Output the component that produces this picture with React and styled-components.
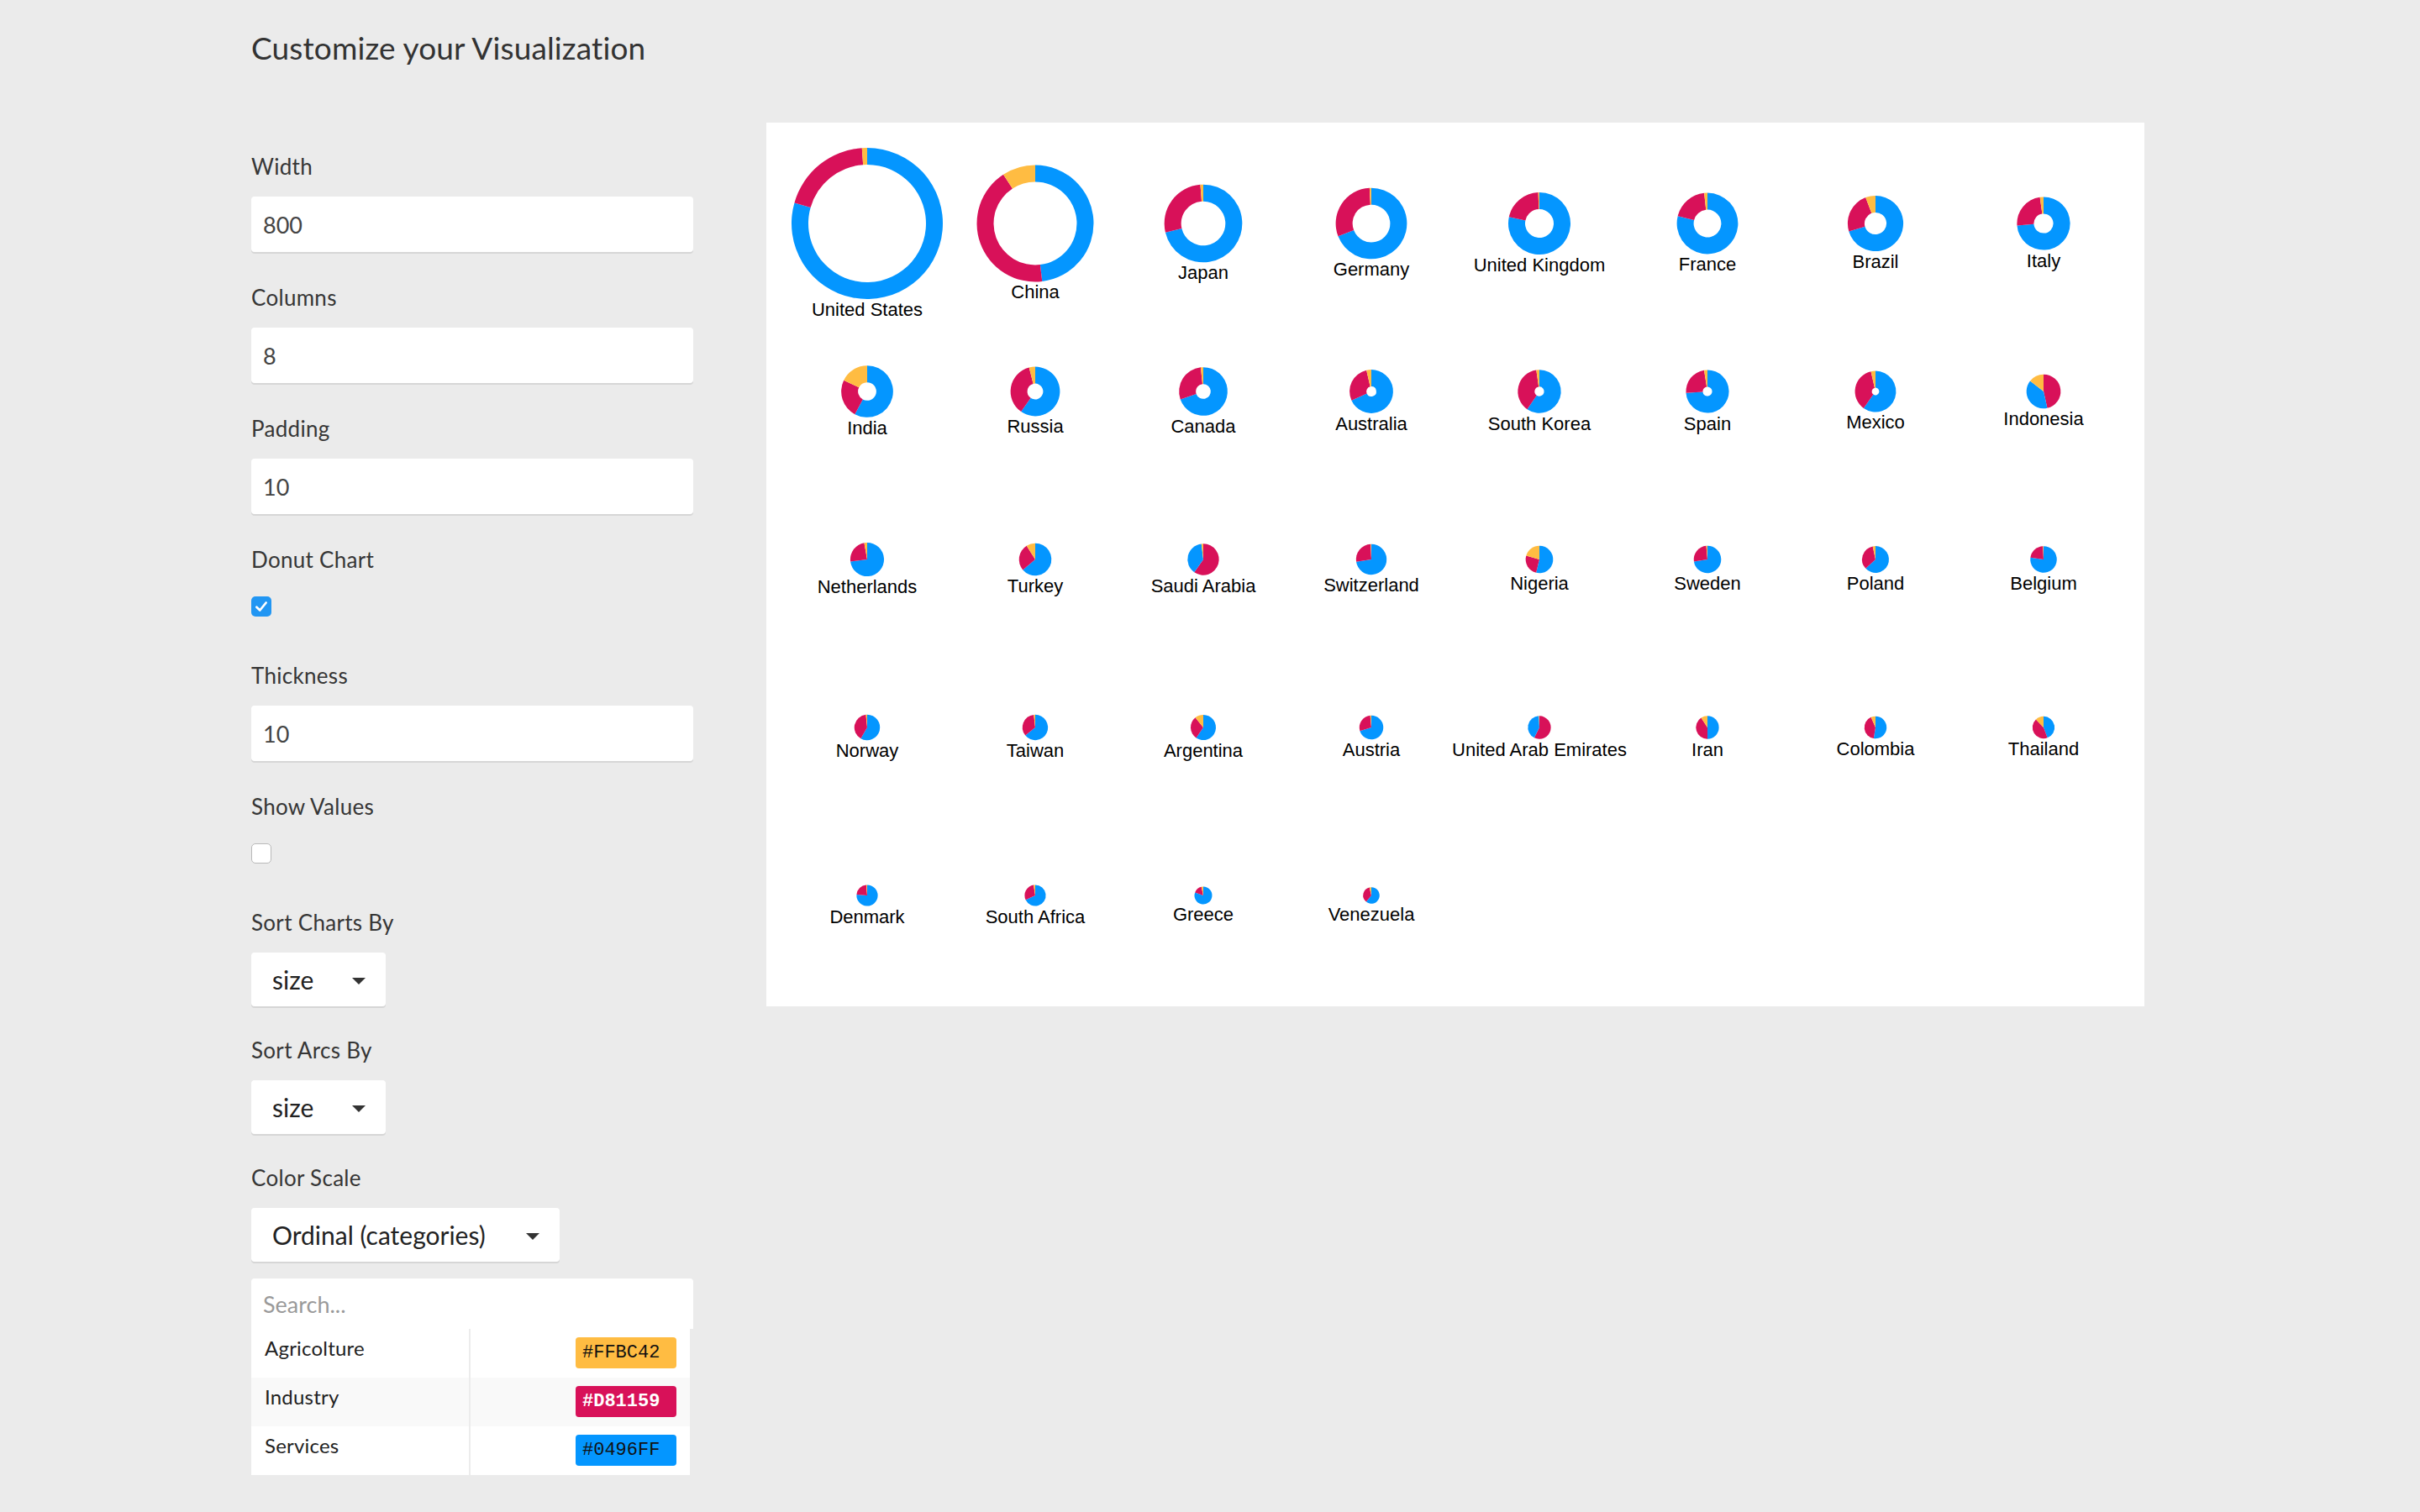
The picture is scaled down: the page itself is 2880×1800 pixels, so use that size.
import styled, { createGlobalStyle } from "styled-components";

const GlobalStyle = createGlobalStyle`
  * { box-sizing: border-box; }
  body {
    margin: 0;
    background: #ebebeb;
    font-family: "Lato", "Open Sans", sans-serif;
    color: #333;
  }
`;

const COLORS = {
  agri: "#FFBC42",
  industry: "#D81159",
  services: "#0496FF",
};

// name, gdp (billions), agriculture %, industry %, services %
const countries = [
  ["United States", 17419, 1.1, 19.5, 79.4],
  ["China", 10380, 9.2, 42.7, 48.1],
  ["Japan", 4616, 1.2, 27.5, 71.3],
  ["Germany", 3860, 0.8, 30.1, 69.1],
  ["United Kingdom", 2945, 0.6, 21.0, 78.4],
  ["France", 2847, 1.7, 19.4, 78.9],
  ["Brazil", 2353, 5.8, 23.8, 70.4],
  ["Italy", 2148, 2.2, 24.0, 73.8],
  ["India", 2049, 17.9, 24.2, 57.9],
  ["Russia", 1857, 4.0, 36.3, 59.7],
  ["Canada", 1789, 1.7, 28.6, 69.7],
  ["Australia", 1444, 3.6, 28.2, 68.2],
  ["South Korea", 1417, 2.3, 38.1, 59.6],
  ["Spain", 1406, 2.5, 23.6, 73.9],
  ["Mexico", 1283, 3.6, 36.6, 59.8],
  ["Indonesia", 889, 14.4, 46.5, 39.1],
  ["Netherlands", 866, 2.8, 24.1, 73.1],
  ["Turkey", 800, 8.9, 27.3, 63.8],
  ["Saudi Arabia", 752, 1.9, 59.7, 38.4],
  ["Switzerland", 712, 0.7, 26.8, 72.5],
  ["Nigeria", 574, 20.6, 25.6, 53.8],
  ["Sweden", 570, 1.4, 26.0, 72.6],
  ["Poland", 548, 3.3, 33.6, 63.1],
  ["Belgium", 535, 0.7, 22.0, 77.3],
  ["Norway", 500, 1.6, 40.1, 58.3],
  ["Taiwan", 495, 1.8, 34.1, 64.1],
  ["Argentina", 485, 10.8, 29.7, 59.5],
  ["Austria", 437, 1.5, 28.4, 70.1],
  ["United Arab Emirates", 402, 0.7, 57.4, 41.9],
  ["Iran", 400, 9.3, 40.7, 50.0],
  ["Colombia", 378, 6.6, 40.8, 52.6],
  ["Thailand", 374, 12.1, 43.6, 44.3],
  ["Denmark", 342, 1.3, 22.5, 76.2],
  ["South Africa", 341, 2.5, 29.5, 68.0],
  ["Greece", 236, 3.4, 16.0, 80.6],
  ["Venezuela", 206, 3.7, 35.5, 60.8],
];

const MAX_GDP = 17419;
const MAX_R = 90;
const THICKNESS = 20;

const point = (r, a) => [r * Math.sin(a), -r * Math.cos(a)];

const arcPath = (inner, outer, a0, a1) => {
  const large = a1 - a0 > Math.PI ? 1 : 0;
  const [x0, y0] = point(outer, a0);
  const [x1, y1] = point(outer, a1);
  const start = `M${x0},${y0}A${outer},${outer} 0 ${large} 1 ${x1},${y1}`;
  if (inner <= 0) return `${start}L0,0Z`;
  const [x2, y2] = point(inner, a1);
  const [x3, y3] = point(inner, a0);
  return `${start}L${x2},${y2}A${inner},${inner} 0 ${large} 0 ${x3},${y3}Z`;
};

const Page = styled.div`
  padding: 35px 0 40px 299px;
  min-height: 1800px;
`;

const Title = styled.h1`
  margin: 0;
  font-size: 37px;
  line-height: 44px;
  font-weight: 400;
  letter-spacing: 0.15px;
  color: #333;
`;

const Main = styled.div`
  display: grid;
  grid-template-columns: 526px 1640px;
  column-gap: 87px;
  align-items: start;
  margin-top: 67px;
`;

const Sidebar = styled.div`
  display: flex;
  flex-direction: column;
  padding-top: 36px;
`;

const Field = styled.div`
  display: flex;
  flex-direction: column;
  align-items: flex-start;
  gap: ${(p) => p.$gap || 20}px;
  margin-bottom: ${(p) => p.$after || 38}px;
`;

const FieldLabel = styled.label`
  font-size: 26px;
  line-height: 32px;
  letter-spacing: 0.3px;
  color: #363636;
`;

const TextInput = styled.input`
  width: 100%;
  height: 66px;
  border: none;
  border-radius: 4px;
  background: #fff;
  box-shadow: 0 2px 0 #d6d6d6;
  padding: 0 14px;
  font-family: "Lato", sans-serif;
  font-size: 27px;
  color: #444;
  outline: none;
  &::placeholder {
    color: #9a9a9a;
  }
`;

const CheckBox = styled.span`
  display: flex;
  align-items: center;
  justify-content: center;
  width: 24px;
  height: 24px;
  border-radius: 5px;
  background: ${(p) => (p.$checked ? "#2196f3" : "#fff")};
  border: ${(p) => (p.$checked ? "none" : "1px solid #b9b9b9")};
`;

const Select = styled.div`
  display: inline-flex;
  align-items: center;
  gap: ${(p) => p.$gap || 46}px;
  height: 64px;
  padding: 0 24px 0 25px;
  background: #fff;
  border-radius: 4px;
  box-shadow: 0 2px 0 #d6d6d6;
  font-size: 30px;
  color: #222;
`;

const Caret = styled.span`
  width: 0;
  height: 0;
  border-left: 8px solid transparent;
  border-right: 8px solid transparent;
  border-top: 8px solid #333;
  margin-top: 4px;
`;

const Legend = styled.div`
  margin-top: 1px;
  width: 526px;
`;

const SearchBox = styled(TextInput)`
  height: 60px;
  box-shadow: none;
  border-radius: 4px 4px 0 0;
  font-size: 27px;
`;

const LegendTable = styled.div`
  width: 522px;
  background: #fff;
  border-radius: 0 0 4px 4px;
`;

const LegendRow = styled.div`
  display: grid;
  grid-template-columns: 259px 2px 1fr;
  height: 58px;
  background: ${(p) => (p.$striped ? "#f9f9f9" : "#fff")};
`;

const RowName = styled.div`
  padding: 8px 16px 0;
  font-size: 24px;
  letter-spacing: 0.2px;
  color: #222;
`;

const Divider = styled.div`
  background: #ececec;
`;

const SwatchCell = styled.div`
  display: flex;
  justify-content: flex-end;
  align-items: flex-start;
  padding: 10px 16px 0 0;
`;

const Swatch = styled.span`
  width: 120px;
  height: 37px;
  border-radius: 4px;
  padding-left: 8px;
  display: flex;
  align-items: center;
  background: ${(p) => p.$color};
  color: ${(p) => (p.$light ? "#fff" : "#111")};
  font-family: "Liberation Mono", "DejaVu Sans Mono", monospace;
  font-size: 22px;
  font-weight: ${(p) => (p.$light ? 700 : 400)};
`;

const ChartPanel = styled.div`
  background: #fff;
  padding: 20px 20px 32px;
`;

const ChartGrid = styled.div`
  display: grid;
  grid-template-columns: repeat(8, 200px);
  grid-auto-rows: 200px;
`;

const Cell = styled.svg`
  display: block;
  overflow: visible;
`;

const CellLabel = styled.text`
  font-family: "Liberation Sans", Arial, sans-serif;
  font-size: 22px;
  fill: #000;
`;

const SmallMultiple = ({ name, gdp, parts }) => {
  const r = MAX_R * Math.sqrt(gdp / MAX_GDP);
  const inner = Math.max(0, r - THICKNESS);
  const total = parts.reduce((s, p) => s + p.value, 0);
  const sorted = [...parts].sort((a, b) => b.value - a.value);
  let angle = 0;
  return (
    <Cell width="200" height="200" viewBox="0 0 200 200">
      <g transform="translate(100,100)">
        {sorted.map((p) => {
          const a0 = angle;
          angle += (p.value / total) * Math.PI * 2;
          return <path key={p.key} d={arcPath(inner, r, a0, angle)} fill={COLORS[p.key]} />;
        })}
        <CellLabel x="0" y={r + 20} textAnchor="middle">
          {name}
        </CellLabel>
      </g>
    </Cell>
  );
};

const CheckIcon = () => (
  <svg width="18" height="18" viewBox="0 0 16 16">
    <path d="M3 8.6 L6.5 12 L13 4" fill="none" stroke="#fff" strokeWidth="2.4" strokeLinecap="round" strokeLinejoin="round" />
  </svg>
);

const legendItems = [
  { name: "Agricolture", color: "#FFBC42" },
  { name: "Industry", color: "#D81159", light: true },
  { name: "Services", color: "#0496FF" },
];

export default function App() {
  return (
    <Page>
      <GlobalStyle />
      <Title>Customize your Visualization</Title>
      <Main>
        <Sidebar>
          <Field>
            <FieldLabel>Width</FieldLabel>
            <TextInput defaultValue="800" />
          </Field>
          <Field>
            <FieldLabel>Columns</FieldLabel>
            <TextInput defaultValue="8" />
          </Field>
          <Field>
            <FieldLabel>Padding</FieldLabel>
            <TextInput defaultValue="10" />
          </Field>
          <Field $gap={28} $after={54}>
            <FieldLabel>Donut Chart</FieldLabel>
            <CheckBox $checked>
              <CheckIcon />
            </CheckBox>
          </Field>
          <Field>
            <FieldLabel>Thickness</FieldLabel>
            <TextInput defaultValue="10" />
          </Field>
          <Field $gap={28} $after={54}>
            <FieldLabel>Show Values</FieldLabel>
            <CheckBox />
          </Field>
          <Field $after={36}>
            <FieldLabel>Sort Charts By</FieldLabel>
            <Select>
              size
              <Caret />
            </Select>
          </Field>
          <Field $after={36}>
            <FieldLabel>Sort Arcs By</FieldLabel>
            <Select>
              size
              <Caret />
            </Select>
          </Field>
          <Field $after={19}>
            <FieldLabel>Color Scale</FieldLabel>
            <Select $gap={48}>
              Ordinal (categories)
              <Caret />
            </Select>
          </Field>
          <Legend>
            <SearchBox placeholder="Search..." />
            <LegendTable>
              {legendItems.map((item, i) => (
                <LegendRow key={item.name} $striped={i === 1}>
                  <RowName>{item.name}</RowName>
                  <Divider />
                  <SwatchCell>
                    <Swatch $color={item.color} $light={item.light}>
                      {item.color}
                    </Swatch>
                  </SwatchCell>
                </LegendRow>
              ))}
            </LegendTable>
          </Legend>
        </Sidebar>
        <ChartPanel>
          <ChartGrid>
            {countries.map(([name, gdp, agri, industry, services]) => (
              <SmallMultiple
                key={name}
                name={name}
                gdp={gdp}
                parts={[
                  { key: "agri", value: agri },
                  { key: "industry", value: industry },
                  { key: "services", value: services },
                ]}
              />
            ))}
          </ChartGrid>
        </ChartPanel>
      </Main>
    </Page>
  );
}
